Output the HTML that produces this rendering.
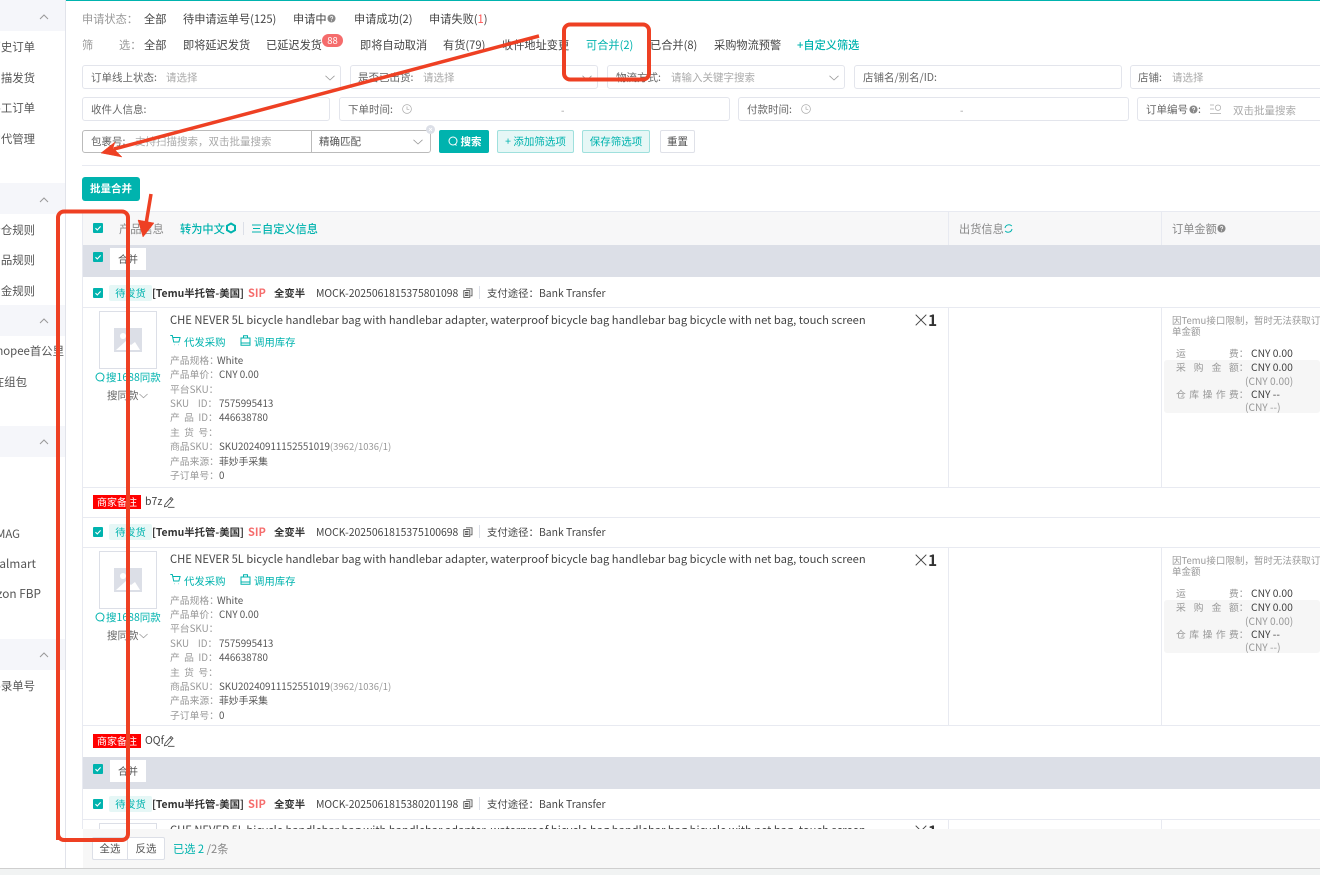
<!DOCTYPE html>
<html lang="zh"><head><meta charset="utf-8"><title>订单</title>
<style>
*{box-sizing:border-box}
html,body{margin:0;padding:0;width:1320px;height:875px;overflow:hidden;background:#fff}
body{position:relative;font-family:"Noto Sans CJK SC","Liberation Sans",sans-serif;font-size:11.2px;color:#444}
.t{position:absolute;white-space:nowrap;line-height:14px}
.g{color:#999}.c{color:#00b3ae}.b{font-weight:700;color:#333}
.box{position:absolute;background:#fff;border:1px solid #e3e5ec;border-radius:3px}
.ln{position:absolute;background:#e8eaf1}
.band{position:absolute;left:0;width:65px;height:31px;background:#f5f6fa}
.side{position:absolute;left:0;top:0;width:65px;height:868px}
.side .t{font-size:11.4px;color:#555}
.btn{position:absolute;height:23px;border-radius:2px;line-height:21px;text-align:center;font-size:10.5px;white-space:nowrap}
.ab{position:absolute}
.wrap{position:absolute;left:0;width:1320px}
.sm{font-size:9.8px}
.sm .t,.lab{font-size:9.8px}
.v{color:#555}
.l{display:inline-block;width:49px}
.tag{position:absolute;left:109px;top:8px;width:43px;height:16px;background:#e6f7f6;color:#00b3ae;border-radius:2px;text-align:center;line-height:16px;font-size:10.2px}
.hd .t{font-size:10.4px;top:9px}
.note{position:absolute;left:93px;width:48px;height:14px;background:#f00;color:#fff;font-size:10px;line-height:14px;text-align:center}
.grp{position:absolute;left:83px;width:1237px;height:32px;background:#dcdfe7}
.grp i{position:absolute;left:27px;top:3px;width:36px;height:22px;background:#fff;font-style:normal;text-align:center;line-height:22px;font-size:10px;color:#555}
.fee{position:absolute;left:1164px;width:156px;background:#f6f6f6;border-radius:3px}
.amt{position:absolute;left:1251px;color:#444;font-size:10.3px !important}
.pt{font-size:10.2px !important}
.f{font-size:10.5px;color:#666}
.ph{font-size:10.5px;color:#aaa}
svg.i{position:absolute;overflow:visible}
</style></head><body>
<svg width="0" height="0" style="position:absolute">
<symbol id="ck" viewBox="0 0 10 10"><rect width="10" height="10" rx="1" fill="#00b3ae"/><path d="M2.5 5.2l1.8 1.8 3.3-3.6" fill="none" stroke="#fff" stroke-width="1.1"/></symbol>
<symbol id="dn" viewBox="0 0 10 6"><path d="M.5.8L5 5l4.500-4.200" fill="none" stroke="#999" stroke-width=".8"/></symbol>
<symbol id="up" viewBox="0 0 10 6"><path d="M1 5L5 1l4 4" fill="none" stroke="#999" stroke-width="1"/></symbol>
<symbol id="clk" viewBox="0 0 10 10"><circle cx="5" cy="5" r="4.400" fill="none" stroke="#aaa" stroke-width=".7"/><path d="M5 2.500V5.300H7.300" fill="none" stroke="#aaa" stroke-width=".7"/></symbol>
<symbol id="q" viewBox="0 0 10 10"><circle cx="5" cy="5" r="4.500" fill="#888"/><path d="M3.700 4c0-1.700 2.700-1.700 2.700 0 0 1-1.300 1-1.300 2M5.100 7v1" fill="none" stroke="#fff" stroke-width=".9"/></symbol>
<symbol id="img" viewBox="0 0 28 24"><rect width="28" height="24" fill="#dcdfe7"/><circle cx="9" cy="8" r="3" fill="#fff"/><path d="M2 22L12 13l5 4 4-3 5 8z" fill="#fff"/></symbol>
<symbol id="cp" viewBox="0 0 10 10"><path d="M3 .8h6v7H7.500M.8 2.600h6v6.800h-6zM2 4.500h3.500M2 6h3.500M2 7.500h3.500" fill="none" stroke="#555" stroke-width=".9"/></symbol>
<symbol id="pen" viewBox="0 0 12 12"><path d="M2 8.500L8 1.500l2 1.800-6 7-2.600.6zM7 2.800l2 1.800M5 11.300h6.500" fill="none" stroke="#444" stroke-width=".8"/></symbol>
<symbol id="cart" viewBox="0 0 11 11"><path d="M.3.500h2l1.400 6.500h5.200l1.200-4.500H3M4.300 9.800h.4M8 9.800h.4" fill="none" stroke="#00b3ae" stroke-width="1"/></symbol>
<symbol id="bag" viewBox="0 0 11 11"><path d="M1 3h9v7.300H1zM3.500 3V.8h4V3M1 8h9" fill="none" stroke="#00b3ae" stroke-width="1"/></symbol>
<symbol id="srch" viewBox="0 0 10 10"><circle cx="5" cy="5" r="4" fill="none" stroke="#00b3ae"/><path d="M7 8l1.500 1.500" stroke="#00b3ae"/></symbol>
<symbol id="x" viewBox="0 0 12 12"><path d="M.7.700l10.600 10.600M11.300.700L.7 11.300" stroke="#444" stroke-width="1"/></symbol>
</svg>

<div class="ab" style="left:65px;top:0;width:1255px;height:1px;background:#00b3ae"></div>

<div class="side" style="border-right:1px solid #e1e3ea;width:66px">
<div class="band" style="top:0"></div><div class="band" style="top:183px"></div><div class="band" style="top:305px"></div><div class="band" style="top:426px"></div><div class="band" style="top:639px"></div>
<svg class="i" style="left:39px;top:14px" width="10" height="6"><use href="#up"/></svg>
<svg class="i" style="left:39px;top:197px" width="10" height="6"><use href="#up"/></svg>
<svg class="i" style="left:39px;top:318px" width="10" height="6"><use href="#up"/></svg>
<svg class="i" style="left:39px;top:439px" width="10" height="6"><use href="#up"/></svg>
<svg class="i" style="left:39px;top:652px" width="10" height="6"><use href="#up"/></svg>
<div class="t" style="right:30px;top:40px">历史订单</div>
<div class="t" style="right:30px;top:71px">扫描发货</div>
<div class="t" style="right:30px;top:101px">手工订单</div>
<div class="t" style="right:30px;top:132px">货代管理</div>
<div class="t" style="right:30px;top:223px">分仓规则</div>
<div class="t" style="right:30px;top:253px">赠品规则</div>
<div class="t" style="right:30px;top:284px">佣金规则</div>
<div class="t" style="right:1px;top:344px">Shopee首公里</div>
<div class="t" style="right:38px;top:375px">现在组包</div>
<div class="t" style="right:45px;top:527px">eMAG</div>
<div class="t" style="right:29px;top:557px;font-size:11.8px">Walmart</div>
<div class="t" style="right:24px;top:587px;font-size:11.8px">Amazon FBP</div>
<div class="t" style="right:30px;top:679px">手录单号</div>
</div>

<!-- filter rows -->
<div class="t g" style="left:82px;top:12px">申请状态：</div>
<div class="t" style="left:144px;top:12px">全部</div>
<div class="t" style="left:183px;top:12px">待申请运单号(125)</div>
<div class="t" style="left:293px;top:12px">申请中</div>
<svg class="i" style="left:327px;top:14px" width="9" height="9"><use href="#q"/></svg>
<div class="t" style="left:354px;top:12px">申请成功(2)</div>
<div class="t" style="left:429px;top:12px">申请失败(<span style="color:#f55">1</span>)</div>

<div class="t g" style="left:82px;top:38px">筛</div><div class="t g" style="left:119px;top:38px">选：</div>
<div class="t" style="left:144px;top:38px">全部</div>
<div class="t" style="left:183px;top:38px">即将延迟发货</div>
<div class="t" style="left:266px;top:38px">已延迟发货</div>
<div class="ab" style="left:322px;top:34px;width:21px;height:13px;border-radius:7px;background:#f56c6c;color:#fff;font-size:9.500px;line-height:13px;text-align:center">88</div>
<div class="t" style="left:360px;top:38px">即将自动取消</div>
<div class="t" style="left:443px;top:38px">有货(79)</div>
<div class="t" style="left:502px;top:38px">收件地址变更</div>
<div class="t c" style="left:586px;top:38px">可合并(2)</div>
<div class="t" style="left:650px;top:38px">已合并(8)</div>
<div class="t" style="left:714px;top:38px">采购物流预警</div>
<div class="t c" style="left:797px;top:38px;font-weight:500">+自定义筛选</div>

<div class="box" style="left:82px;top:65px;width:259px;height:24px"></div>
<div class="t f" style="left:91px;top:71px">订单线上状态:</div><div class="t ph" style="left:166px;top:71px">请选择</div>
<svg class="i" style="left:325px;top:75px" width="10" height="6"><use href="#dn"/></svg>
<div class="box" style="left:350px;top:65px;width:248px;height:24px"></div>
<div class="t f" style="left:358px;top:71px">是否已出货:</div><div class="t ph" style="left:423px;top:71px">请选择</div>
<svg class="i" style="left:582px;top:75px" width="10" height="6"><use href="#dn"/></svg>
<div class="box" style="left:607px;top:65px;width:238px;height:24px"></div>
<div class="t f" style="left:616px;top:71px">物流方式:</div><div class="t ph" style="left:671px;top:71px">请输入关键字搜索</div>
<svg class="i" style="left:829px;top:75px" width="10" height="6"><use href="#dn"/></svg>
<div class="box" style="left:854px;top:65px;width:268px;height:24px"></div>
<div class="t f" style="left:863px;top:71px">店铺名/别名/ID:</div>
<div class="box" style="left:1130px;top:65px;width:200px;height:24px"></div>
<div class="t f" style="left:1138px;top:71px">店铺:</div><div class="t ph" style="left:1172px;top:71px">请选择</div>

<div class="box" style="left:82px;top:97px;width:248px;height:24px"></div>
<div class="t f" style="left:91px;top:103px">收件人信息:</div>
<div class="box" style="left:339px;top:97px;width:391px;height:24px"></div>
<div class="t f" style="left:348px;top:103px">下单时间:</div>
<svg class="i" style="left:402px;top:104px" width="10" height="10"><use href="#clk"/></svg>
<div class="t" style="left:561px;top:103px;font-size:10px;color:#999">-</div>
<div class="box" style="left:738px;top:97px;width:391px;height:24px"></div>
<div class="t f" style="left:747px;top:103px">付款时间:</div>
<svg class="i" style="left:801px;top:104px" width="10" height="10"><use href="#clk"/></svg>
<div class="t" style="left:960px;top:103px;font-size:10px;color:#999">-</div>
<div class="box" style="left:1137px;top:97px;width:200px;height:24px"></div>
<div class="t f" style="left:1146px;top:103px">订单编号</div>
<svg class="i" style="left:1189px;top:105px" width="9" height="9"><use href="#q"/></svg><div class="t f" style="left:1198px;top:103px">:</div>
<svg class="i" style="left:1210px;top:104px" width="12" height="11"><path d="M0 1h4M0 5h4M0 9.500h11M8 1a2.700 2.700 0 1 0 .01 0" fill="none" stroke="#aaa" stroke-width=".7"/></svg>
<div class="t ph" style="left:1233px;top:104px">双击批量搜索</div>

<div class="ab" style="left:82px;top:130px;width:349px;height:23px;border:1px solid #bbb;border-radius:3px;background:#fff"></div>
<div class="ab" style="left:311px;top:130px;width:1px;height:23px;background:#bbb"></div>
<div class="t f" style="left:91px;top:135px">包裹号:</div>
<div class="t ph" style="left:135px;top:135px">支持扫描搜索，双击批量搜索</div>
<div class="t" style="left:319px;top:135px;font-size:10.500px;color:#555">精确匹配</div>
<svg class="i" style="left:413px;top:139px" width="10" height="6"><use href="#dn"/></svg>
<div class="ab" style="left:426px;top:125px;width:9px;height:9px;border-radius:5px;background:#dcdfe7"></div>
<svg class="i" style="left:428px;top:127px" width="5" height="5"><path d="M1 1l3 3M4 1l-3 3" stroke="#fff" stroke-width=".8"/></svg>
<div class="btn" style="left:439px;top:130px;width:50px;background:#00b3ae;color:#fff;font-weight:700;padding-left:14px;line-height:23px">搜索</div>
<svg class="i" style="left:448px;top:136px" width="10" height="10"><circle cx="5" cy="5" r="4" fill="none" stroke="#fff"/><path d="M7 8l1.500 1.500" stroke="#fff"/></svg>
<div class="btn" style="left:497px;top:130px;width:77px;background:#e6f7f6;border:1px solid #9fe0dd;color:#00b3ae">+ 添加筛选项</div>
<div class="btn" style="left:582px;top:130px;width:68px;background:#e6f7f6;border:1px solid #9fe0dd;color:#00b3ae">保存筛选项</div>
<div class="btn" style="left:660px;top:130px;width:35px;background:#fff;border:1px solid #dfe1e8;color:#555">重置</div>
<div class="ln" style="left:82px;top:165px;width:1238px;height:1px"></div>
<div class="btn" style="left:82px;top:177px;width:58px;height:24px;background:#00b3ae;color:#fff;font-weight:700;line-height:23px;border-radius:3px">批量合并</div>

<!-- table -->
<div class="ln" style="left:82px;top:211px;width:1px;height:618px"></div>
<div class="ab" style="left:83px;top:211px;width:1237px;height:34px;background:#f7f7f8;border-top:1px solid #e8eaf1"></div>
<div class="ln" style="left:948px;top:211px;width:1px;height:34px"></div>
<div class="ln" style="left:1161px;top:211px;width:1px;height:34px"></div>
<svg class="i" style="left:93px;top:223px" width="10" height="10"><use href="#ck"/></svg>
<div class="t" style="left:119px;top:222px;color:#888">产品信息</div>
<div class="t c" style="left:180px;top:222px;font-weight:500">转为中文</div>
<svg class="i" style="left:226px;top:223px" width="10" height="10"><path d="M5 .5l4 2.300v4.400L5 9.500 1 7.200V2.800z" fill="none" stroke="#00b3ae" stroke-width="2"/></svg>
<div class="ab" style="left:243px;top:222px;width:1px;height:13px;background:#dcdfe7"></div>
<svg class="i" style="left:252px;top:224px" width="9" height="9"><path d="M0 1h9M1 4.500h7M0 8h9" stroke="#00b3ae" stroke-width="1"/></svg>
<div class="t c" style="left:262px;top:222px;font-weight:500">自定义信息</div>
<div class="t" style="left:959px;top:222px;color:#888">出货信息</div>
<svg class="i" style="left:1004px;top:224px" width="9" height="9"><path d="M7.800 2A4 4 0 0 0 1 4M1.200 7A4 4 0 0 0 8 5" fill="none" stroke="#00b3ae"/></svg>
<div class="t" style="left:1172px;top:222px;color:#888">订单金额</div>
<svg class="i" style="left:1217px;top:224px" width="9" height="9"><use href="#q"/></svg>

<div class="grp" style="top:245px"><i>合并</i></div>
<svg class="i" style="left:93px;top:252px" width="10" height="10"><use href="#ck"/></svg>

<!-- order 1 -->
<div class="wrap hd" style="top:277px;height:30px">
<svg class="i" style="left:93px;top:11px" width="10" height="10"><use href="#ck"/></svg>
<div class="tag">待发货</div>
<div class="t b" style="left:152px">[Temu半托管-美国]</div><div class="t b" style="left:248px;color:#f56c6c;font-size:11px">SIP</div><div class="t b" style="left:274px">全变半</div>
<div class="t" style="left:316px">MOCK-2025061815375801098</div>
<svg class="i" style="left:463px;top:11px" width="10" height="10"><use href="#cp"/></svg>
<div class="ab" style="left:479px;top:9px;width:1px;height:13px;background:#dcdfe7"></div>
<div class="t" style="left:487px">支付途径：Bank Transfer</div>
</div>
<div class="ln" style="left:83px;top:307px;width:1237px;height:1px"></div>
<div class="wrap" style="top:307px;height:180px">
<div class="ln" style="left:948px;top:0;width:1px;height:180px"></div><div class="ln" style="left:1161px;top:0;width:1px;height:180px"></div>
<div class="ab" style="left:99px;top:4px;width:58px;height:58px;border:1px solid #dcdfe7"></div>
<svg class="i" style="left:114px;top:21px" width="28" height="24"><use href="#img"/></svg>
<svg class="i" style="left:95px;top:65px" width="10" height="10"><use href="#srch"/></svg>
<div class="t c" style="left:106px;top:64px;font-size:10.500px">搜1688同款</div>
<div class="t" style="left:107px;top:82px;font-size:10.500px;color:#666">搜同款</div>
<svg class="i" style="left:139px;top:86px" width="9" height="6"><use href="#dn"/></svg>
<div class="t" style="left:170px;top:6px;font-size:11.180px">CHE NEVER 5L bicycle handlebar bag with handlebar adapter, waterproof bicycle bag handlebar bag bicycle with net bag, touch screen</div>
<svg class="i" style="left:170px;top:28px" width="11" height="11"><use href="#cart"/></svg>
<div class="t c" style="left:184px;top:28px;font-size:10.400px">代发采购</div>
<svg class="i" style="left:240px;top:28px" width="11" height="11"><use href="#bag"/></svg>
<div class="t c" style="left:254px;top:28px;font-size:10.400px">调用库存</div>
<div class="sm">
<div class="t g" style="left:170px;top:46px">产品规格：<span class="v" style="margin-left:-2px">White</span></div>
<div class="t g" style="left:170px;top:60px"><span class="l">产品单价：</span><span class="v">CNY 0.00</span></div>
<div class="t g" style="left:170px;top:75px">平台SKU：</div>
<div class="t g" style="left:170px;top:89px"><span class="l">SKU&nbsp;&nbsp;&nbsp;&nbsp;ID：</span><span class="v">7575995413</span></div>
<div class="t g" style="left:170px;top:103px"><span class="l">产&nbsp;&nbsp;品&nbsp;&nbsp;ID：</span><span class="v">446638780</span></div>
<div class="t g" style="left:170px;top:118px">主&nbsp;&nbsp;货&nbsp;&nbsp;号：</div>
<div class="t g" style="left:170px;top:132px"><span class="l">商品SKU：</span><span class="v" style="letter-spacing:-.03px">SKU20240911152551019</span><span style="font-size:9.500px">(3962/1036/1)</span></div>
<div class="t g" style="left:170px;top:147px"><span class="l">产品来源：</span><span class="v">菲妙手采集</span></div>
<div class="t g" style="left:170px;top:161px"><span class="l">子订单号：</span><span class="v">0</span></div>
</div>
<svg class="i" style="left:915px;top:7px" width="12" height="12"><use href="#x"/></svg>
<div class="t" style="left:928px;top:6px;font-size:15.500px;font-weight:700;color:#333">1</div>
<div class="t g sm" style="left:1172px;top:8px;font-size:9.500px;line-height:11px">因Temu接口限制，暂时无法获取订<br>单金额</div>
<div class="fee" style="top:53px;height:53px"></div>
<div class="sm">
<div class="t g" style="left:1176px;top:39px">运</div><div class="t g" style="left:1229px;top:39px">费：</div><div class="t amt" style="top:39px">CNY 0.00</div>
<div class="t g" style="left:1176px;top:53px;letter-spacing:8px">采购金</div><div class="t g" style="left:1229px;top:53px">额：</div><div class="t amt" style="top:53px">CNY 0.00</div>
<div class="t g pt" style="left:1245px;top:67px">(CNY 0.00)</div>
<div class="t g" style="left:1176px;top:80px;letter-spacing:3.500px">仓库操作</div><div class="t g" style="left:1229px;top:80px">费：</div><div class="t amt" style="top:80px">CNY --</div>
<div class="t g pt" style="left:1245px;top:93px">(CNY --)</div>
</div>
</div>
<div class="ln" style="left:83px;top:487px;width:1237px;height:1px"></div>
<div class="note" style="top:495px">商家备注</div><div class="t" style="left:145px;top:495px;font-size:10.500px">b7z</div>
<svg class="i" style="left:163px;top:496px" width="12" height="12"><use href="#pen"/></svg>
<div class="ln" style="left:83px;top:517px;width:1237px;height:1px"></div>

<!-- order 2 -->
<div class="wrap hd" style="top:516px;height:30px">
<svg class="i" style="left:93px;top:11px" width="10" height="10"><use href="#ck"/></svg>
<div class="tag">待发货</div>
<div class="t b" style="left:152px">[Temu半托管-美国]</div><div class="t b" style="left:248px;color:#f56c6c;font-size:11px">SIP</div><div class="t b" style="left:274px">全变半</div>
<div class="t" style="left:316px">MOCK-2025061815375100698</div>
<svg class="i" style="left:463px;top:11px" width="10" height="10"><use href="#cp"/></svg>
<div class="ab" style="left:479px;top:9px;width:1px;height:13px;background:#dcdfe7"></div>
<div class="t" style="left:487px">支付途径：Bank Transfer</div>
</div>
<div class="ln" style="left:83px;top:547px;width:1237px;height:1px"></div>
<div class="wrap" style="top:547px;height:178px">
<div class="ln" style="left:948px;top:0;width:1px;height:178px"></div><div class="ln" style="left:1161px;top:0;width:1px;height:178px"></div>
<div class="ab" style="left:99px;top:4px;width:58px;height:58px;border:1px solid #dcdfe7"></div>
<svg class="i" style="left:114px;top:21px" width="28" height="24"><use href="#img"/></svg>
<svg class="i" style="left:95px;top:65px" width="10" height="10"><use href="#srch"/></svg>
<div class="t c" style="left:106px;top:64px;font-size:10.500px">搜1688同款</div>
<div class="t" style="left:107px;top:82px;font-size:10.500px;color:#666">搜同款</div>
<svg class="i" style="left:139px;top:86px" width="9" height="6"><use href="#dn"/></svg>
<div class="t" style="left:170px;top:5px;font-size:11.180px">CHE NEVER 5L bicycle handlebar bag with handlebar adapter, waterproof bicycle bag handlebar bag bicycle with net bag, touch screen</div>
<svg class="i" style="left:170px;top:27px" width="11" height="11"><use href="#cart"/></svg>
<div class="t c" style="left:184px;top:27px;font-size:10.400px">代发采购</div>
<svg class="i" style="left:240px;top:27px" width="11" height="11"><use href="#bag"/></svg>
<div class="t c" style="left:254px;top:27px;font-size:10.400px">调用库存</div>
<div class="sm">
<div class="t g" style="left:170px;top:46px">产品规格：<span class="v" style="margin-left:-2px">White</span></div>
<div class="t g" style="left:170px;top:60px"><span class="l">产品单价：</span><span class="v">CNY 0.00</span></div>
<div class="t g" style="left:170px;top:74px">平台SKU：</div>
<div class="t g" style="left:170px;top:89px"><span class="l">SKU&nbsp;&nbsp;&nbsp;&nbsp;ID：</span><span class="v">7575995413</span></div>
<div class="t g" style="left:170px;top:103px"><span class="l">产&nbsp;&nbsp;品&nbsp;&nbsp;ID：</span><span class="v">446638780</span></div>
<div class="t g" style="left:170px;top:118px">主&nbsp;&nbsp;货&nbsp;&nbsp;号：</div>
<div class="t g" style="left:170px;top:132px"><span class="l">商品SKU：</span><span class="v" style="letter-spacing:-.03px">SKU20240911152551019</span><span style="font-size:9.500px">(3962/1036/1)</span></div>
<div class="t g" style="left:170px;top:146px"><span class="l">产品来源：</span><span class="v">菲妙手采集</span></div>
<div class="t g" style="left:170px;top:161px"><span class="l">子订单号：</span><span class="v">0</span></div>
</div>
<svg class="i" style="left:915px;top:7px" width="12" height="12"><use href="#x"/></svg>
<div class="t" style="left:928px;top:6px;font-size:15.500px;font-weight:700;color:#333">1</div>
<div class="t g sm" style="left:1172px;top:8px;font-size:9.500px;line-height:11px">因Temu接口限制，暂时无法获取订<br>单金额</div>
<div class="fee" style="top:53px;height:53px"></div>
<div class="sm">
<div class="t g" style="left:1176px;top:39px">运</div><div class="t g" style="left:1229px;top:39px">费：</div><div class="t amt" style="top:39px">CNY 0.00</div>
<div class="t g" style="left:1176px;top:53px;letter-spacing:8px">采购金</div><div class="t g" style="left:1229px;top:53px">额：</div><div class="t amt" style="top:53px">CNY 0.00</div>
<div class="t g pt" style="left:1245px;top:67px">(CNY 0.00)</div>
<div class="t g" style="left:1176px;top:80px;letter-spacing:3.500px">仓库操作</div><div class="t g" style="left:1229px;top:80px">费：</div><div class="t amt" style="top:80px">CNY --</div>
<div class="t g pt" style="left:1245px;top:93px">(CNY --)</div>
</div>
</div>
<div class="ln" style="left:83px;top:725px;width:1237px;height:1px"></div>
<div class="note" style="top:734px">商家备注</div><div class="t" style="left:145px;top:734px;font-size:10.500px">OQf</div>
<svg class="i" style="left:163px;top:735px" width="12" height="12"><use href="#pen"/></svg>

<div class="grp" style="top:757px"><i>合并</i></div>
<svg class="i" style="left:93px;top:764px" width="10" height="10"><use href="#ck"/></svg>

<!-- order 3 -->
<div class="wrap hd" style="top:788px;height:30px">
<svg class="i" style="left:93px;top:11px" width="10" height="10"><use href="#ck"/></svg>
<div class="tag">待发货</div>
<div class="t b" style="left:152px">[Temu半托管-美国]</div><div class="t b" style="left:248px;color:#f56c6c;font-size:11px">SIP</div><div class="t b" style="left:274px">全变半</div>
<div class="t" style="left:316px">MOCK-2025061815380201198</div>
<svg class="i" style="left:463px;top:11px" width="10" height="10"><use href="#cp"/></svg>
<div class="ab" style="left:479px;top:9px;width:1px;height:13px;background:#dcdfe7"></div>
<div class="t" style="left:487px">支付途径：Bank Transfer</div>
</div>
<div class="ln" style="left:83px;top:819px;width:1237px;height:1px"></div>
<div class="ln" style="left:948px;top:819px;width:1px;height:12px"></div><div class="ln" style="left:1161px;top:819px;width:1px;height:12px"></div>
<div class="ab" style="left:99px;top:823px;width:58px;height:20px;border:1px solid #dcdfe7"></div>
<div class="t" style="left:170px;top:823px;font-size:11.180px">CHE NEVER 5L bicycle handlebar bag with handlebar adapter, waterproof bicycle bag handlebar bag bicycle with net bag, touch screen</div>
<svg class="i" style="left:915px;top:825px" width="12" height="12"><use href="#x"/></svg>
<div class="t" style="left:928px;top:824px;font-size:15.500px;font-weight:700;color:#333">1</div>

<!-- bottom bar -->
<div class="ab" style="left:83px;top:829px;width:1237px;height:39px;background:#f7f7f7"></div>
<div class="ab" style="left:0;top:868px;width:1320px;height:7px;background:#f1f3f3;border-top:1px solid #cfcfcf"></div>
<div class="btn" style="left:92px;top:837px;width:36px;background:#fff;border:1px solid #dcdfe7;color:#555;border-radius:2px 0 0 2px">全选</div>
<div class="btn" style="left:127px;top:837px;width:38px;background:#fff;border:1px solid #dcdfe7;color:#555;border-radius:0 2px 2px 0">反选</div>
<div class="t" style="left:173px;top:842px;color:#888"><span class="c">已选 2</span> /2条</div>

<!-- annotations -->
<svg class="ab" style="left:0;top:0" width="1320" height="875" fill="none">
<rect x="564" y="24.500" width="85" height="55" rx="6" stroke="#ee4023" stroke-width="4"/>
<path d="M58 840V217.500a6 6 0 0 1 6-6h58a6 6 0 0 1 6 6V834a6 6 0 0 1-6 6H64a6 6 0 0 1-6-6" stroke="#ee4023" stroke-width="4"/>
<path d="M539 36L114 149" stroke="#ee4023" stroke-width="3.500"/>
<path d="M101 153L115 142 113 148 122 157z" fill="#ee4023" stroke="#ee4023" stroke-width=".5"/>
<path d="M151 194L146 224" stroke="#ee4023" stroke-width="3.500"/>
<path d="M143 237L138 220 154 223z" fill="#ee4023" stroke="#ee4023" stroke-width=".5"/>
</svg>
</body></html>
